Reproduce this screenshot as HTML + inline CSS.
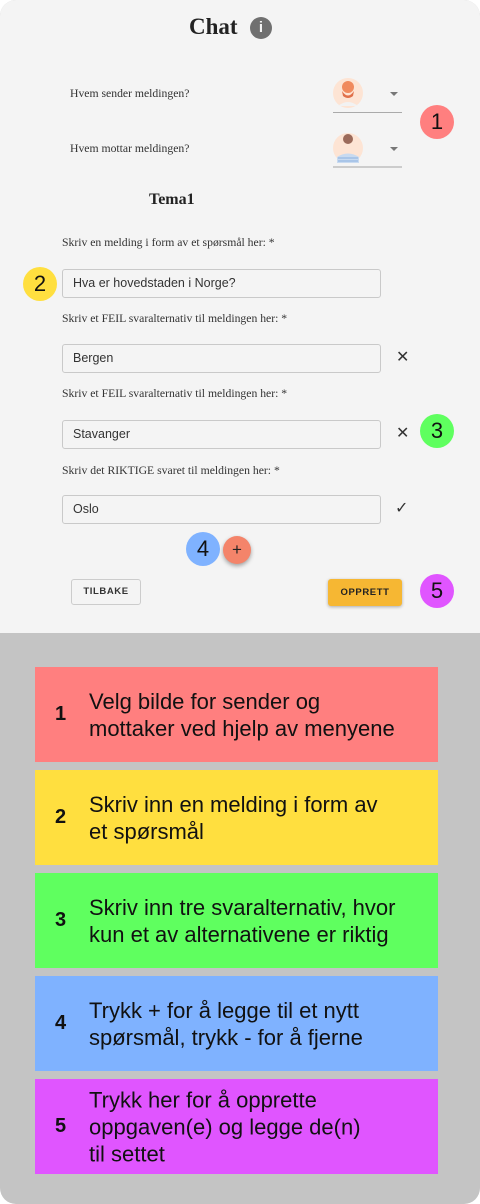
<!DOCTYPE html>
<html><head><meta charset="utf-8"><style>
*{box-sizing:border-box;margin:0;padding:0}
body{width:480px;height:1204px;background:#fff;position:relative;overflow:hidden;font-family:"Liberation Serif",serif}
.wrap{position:absolute;left:0;top:0;width:480px;height:1204px;border-radius:16px;background:#c4c4c4;overflow:hidden}
.top{position:absolute;left:0;top:0;width:480px;height:633px;background:#f4f4f4}
.a{position:absolute}
.lbl{position:absolute;font-size:11.7px;color:#333;left:62px}
.inp{position:absolute;left:62px;width:319px;height:29px;border:1px solid #c9c9c9;border-radius:3px;font-family:"Liberation Sans",sans-serif;font-size:12.5px;color:#333;padding-left:10px;line-height:27px;background:#f4f4f4}
.badge{position:absolute;width:34px;height:34px;border-radius:50%;font-family:"Liberation Sans",sans-serif;font-size:22px;text-align:center;line-height:34px;color:#111}
.box{position:absolute;left:35px;width:403px;height:95px;font-family:"Liberation Sans",sans-serif;color:#111}
.box .n{position:absolute;left:20px;width:12px;top:0;height:95px;line-height:95px;font-weight:bold;font-size:20px}
.box .t{position:absolute;left:54px;right:0;top:50%;transform:translateY(-50%);font-size:22px;line-height:27px;white-space:nowrap}
.x{position:absolute;font-family:"Liberation Sans",sans-serif;font-size:16px;color:#333}
</style></head><body><div class="wrap"><div class="top">
<div class="a" style="left:189px;top:14px;font-size:23px;font-weight:bold;color:#222">Chat</div>
<div class="a" style="left:250px;top:17px;width:22px;height:22px;border-radius:50%;background:#707070;color:#f4f4f4;font-family:'Liberation Sans',sans-serif;font-weight:bold;font-size:15px;text-align:center;line-height:22px">i</div>
<div class="a" style="left:70px;top:87px;font-size:11.7px;color:#333">Hvem sender meldingen?</div>
<div class="a" style="left:70px;top:142px;font-size:11.7px;color:#333">Hvem mottar meldingen?</div>
<svg class="a" style="left:333px;top:78px" width="30" height="30"><circle cx="15" cy="15" r="15" fill="#fde4d4"/><circle cx="15" cy="9" r="6" fill="#f08a5d"/><path d="M9 13 Q15 22 21 13 L20 18 Q15 22 10 18Z" fill="#e0704a"/><path d="M5 28 Q15 20 25 28" fill="#f2f2f2"/></svg>
<svg class="a" style="left:333px;top:133px" width="30" height="30"><circle cx="15" cy="15" r="15" fill="#fde4d4"/><circle cx="15" cy="6" r="5" fill="#9b6a5a"/><path d="M4 24 Q15 17 26 24 L26 30 L4 30Z" fill="#c8daf0"/><path d="M5 25 H25 M5 28 H25" stroke="#8ab0e0" stroke-width="1"/></svg>
<div class="a" style="left:333px;top:112px;width:69px;height:1px;background:#aaa"></div>
<div class="a" style="left:333px;top:166px;width:69px;height:2px;background:#ccc"></div>
<div class="a" style="left:390px;top:92px;border:4px solid transparent;border-top:4px solid #777"></div>
<div class="a" style="left:390px;top:147px;border:4px solid transparent;border-top:4px solid #777"></div>
<div class="badge" style="left:420px;top:105px;background:#ff7f7f">1</div>
<div class="a" style="left:149px;top:191px;font-size:16px;font-weight:bold;color:#222">Tema1</div>
<div class="lbl" style="top:236px">Skriv en melding i form av et spørsmål her: *</div>
<div class="inp" style="top:269px">Hva er hovedstaden i Norge?</div>
<div class="badge" style="left:23px;top:267px;background:#ffdf3f">2</div>
<div class="lbl" style="top:312px">Skriv et FEIL svaralternativ til meldingen her: *</div>
<div class="inp" style="top:344px">Bergen</div>
<div class="x" style="left:396px;top:347px">✕</div>
<div class="lbl" style="top:387px">Skriv et FEIL svaralternativ til meldingen her: *</div>
<div class="inp" style="top:420px">Stavanger</div>
<div class="x" style="left:396px;top:423px">✕</div>
<div class="badge" style="left:420px;top:414px;background:#5fff5f">3</div>
<div class="lbl" style="top:464px">Skriv det RIKTIGE svaret til meldingen her: *</div>
<div class="inp" style="top:495px">Oslo</div>
<div class="x" style="left:395px;top:498px">✓</div>
<div class="badge" style="left:186px;top:532px;background:#7fb2ff">4</div>
<div class="a" style="left:223px;top:536px;width:28px;height:28px;border-radius:50%;background:#f4846a;box-shadow:0 2px 4px rgba(0,0,0,.35);text-align:center;line-height:28px;font-family:'Liberation Sans',sans-serif;font-size:17px;color:#222">+</div>
<div class="a" style="left:71px;top:579px;width:70px;height:26px;border:1px solid #ccc;border-radius:3px;text-align:center;line-height:24px;font-family:'Liberation Sans',sans-serif;font-size:9.5px;font-weight:bold;letter-spacing:.6px;color:#333">TILBAKE</div>
<div class="a" style="left:328px;top:579px;width:74px;height:27px;border-radius:3px;background:#f6b733;box-shadow:0 1px 3px rgba(0,0,0,.3);text-align:center;line-height:27px;font-family:'Liberation Sans',sans-serif;font-size:9.5px;font-weight:bold;letter-spacing:.6px;color:#222">OPPRETT</div>
<div class="badge" style="left:420px;top:574px;background:#e055ff">5</div>
</div>
<div class="box" style="top:667px;background:#ff7f7f"><div class="n">1</div><div class="t">Velg bilde for sender og<br>mottaker ved hjelp av menyene</div></div>
<div class="box" style="top:770px;background:#ffdf3f"><div class="n">2</div><div class="t">Skriv inn en melding i form av<br>et spørsmål</div></div>
<div class="box" style="top:873px;background:#5fff5f"><div class="n">3</div><div class="t">Skriv inn tre svaralternativ, hvor<br>kun et av alternativene er riktig</div></div>
<div class="box" style="top:976px;background:#7fb2ff"><div class="n">4</div><div class="t">Trykk + for å legge til et nytt<br>spørsmål, trykk - for å fjerne</div></div>
<div class="box" style="top:1079px;background:#e055ff"><div class="n">5</div><div class="t">Trykk her for å opprette<br>oppgaven(e) og legge de(n)<br>til settet</div></div>
</div></body></html>
